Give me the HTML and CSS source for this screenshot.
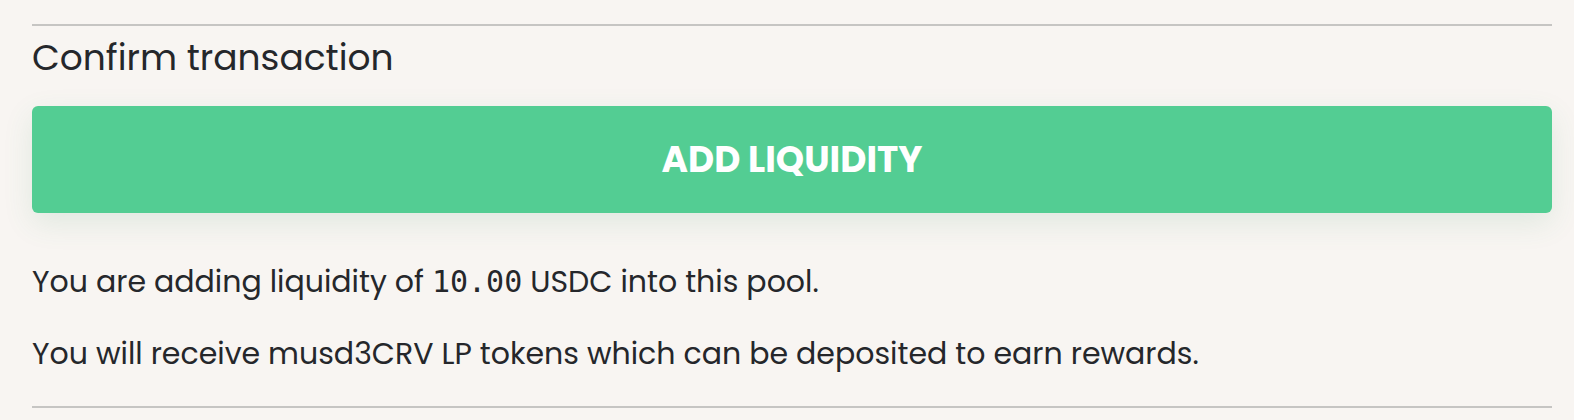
FILE: index.html
```html
<!DOCTYPE html>
<html>
<head>
<meta charset="utf-8">
<link rel="stylesheet" href="styles.css">
</head>
<body>
<section class="panel">
  <div class="rule"></div>
  <h2 class="title">Confirm transaction</h2>
  <button class="btn" type="button">ADD LIQUIDITY</button>
  <p class="info first">You are adding liquidity of <span class="mono">10.00</span> USDC into this pool.</p>
  <p class="info">You will receive musd3CRV LP tokens which can be deposited to earn rewards.</p>
  <div class="rule bottom"></div>
</section>
</body>
</html>
```
FILE: styles.css
```css
html, body {
  margin: 0;
  padding: 0;
  background: #f8f5f2;
}
.panel {
  padding: 24px 22px 0 32px;
  font-family: "Poppins", "Open Sans", sans-serif;
  color: #25272b;
  display: flex;
  flex-direction: column;
}
.rule {
  height: 2px;
  background: #c6c5c3;
}
.rule.bottom {
  margin-top: 16px;
}
.title {
  margin: 0;
  font-size: 36px;
  font-weight: 400;
  line-height: 64px;
  height: 80px;
}
.btn {
  height: 107px;
  border: none;
  border-radius: 6px;
  background: #53cd93;
  color: #ffffff;
  font-family: inherit;
  font-weight: 700;
  font-size: 36px;
  box-shadow: 0 10px 30px rgba(60, 150, 100, 0.12);
}
.info {
  margin: 0;
  font-size: 30px;
  line-height: 72px;
}
.info.first {
  margin-top: 33px;
}
.mono {
  font-family: "DejaVu Sans Mono", monospace;
  font-size: 30px;
}
```
